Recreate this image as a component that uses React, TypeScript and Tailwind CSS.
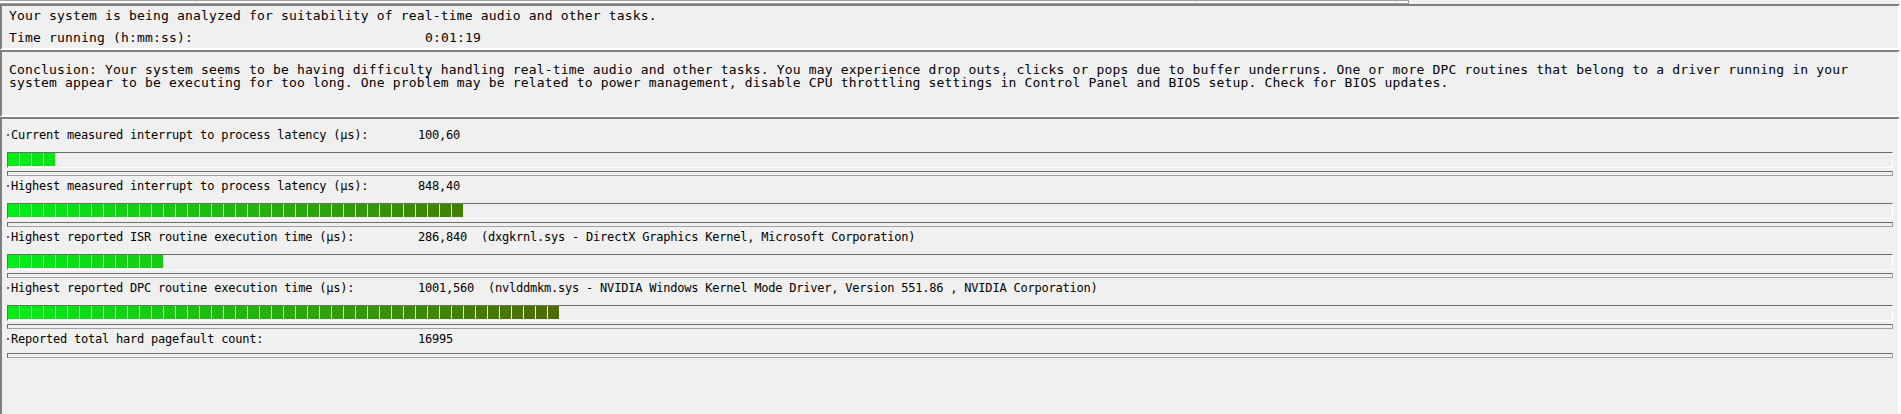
import React from "react";

type Row = { label: string; value: string; segs: number };

const ROWS: Row[] = [
  { label: "Current measured interrupt to process latency (µs):", value: "100,60", segs: 4 },
  { label: "Highest measured interrupt to process latency (µs):", value: "848,40", segs: 38 },
  {
    label: "Highest reported ISR routine execution time (µs):",
    value: "286,840  (dxgkrnl.sys - DirectX Graphics Kernel, Microsoft Corporation)",
    segs: 13,
  },
  {
    label: "Highest reported DPC routine execution time (µs):",
    value: "1001,560  (nvlddmkm.sys - NVIDIA Windows Kernel Mode Driver, Version 551.86 , NVIDIA Corporation)",
    segs: 46,
  },
];

// green -> olive, depends on block index
const segColor = (i: number) => {
  const t = i / 46;
  const r = Math.round(80 * t);
  const g = Math.round(238 - 135 * t);
  const b = Math.round(22 * (1 - t));
  return `rgb(${r},${g},${b})`;
};

const sunken = "border-2 border-t-[#7f7f7f] border-l-[#7f7f7f] border-b-white border-r-white";

const Label = ({ text, value }: { text: string; value: string }) => (
  <div className="flex h-[16px] items-center text-[12px] leading-[16px] tracking-[-0.22px] whitespace-pre">
    <span className="mr-[1px] h-[2px] w-[2px] bg-[#6a6a6a]" />
    <span className="w-[408px] pl-[1px]">{text}</span>
    <span>{value}</span>
  </div>
);

const ThinBox = () => (
  <div className="h-[5px] w-full border border-t-[#6d6d6d] border-l-[#6d6d6d] border-b-[#a0a0a0] border-r-[#a0a0a0] bg-[#f0f0f0]" />
);

const Bar = ({ segs }: { segs: number }) => (
  <div className="h-[16px] w-full border border-t-[#6d6d6d] border-l-[#6d6d6d] border-b-white border-r-white bg-[#f0f0f0]">
    <div className="flex h-[13px] gap-px">
      {Array.from({ length: segs }).map((_, i) => (
        <div key={i} className="h-full w-[11px]" style={{ backgroundColor: segColor(i) }} />
      ))}
    </div>
  </div>
);

export default function App() {
  return (
    <div className="flex h-[414px] w-[1900px] flex-col overflow-hidden bg-[#f0f0f0] font-['DejaVu_Sans_Mono',monospace] text-black">
      {/* bottom edge of the control above */}
      <div className="relative h-[4px] w-[1409px] border-t border-r border-b border-[#a0a0a0] bg-white">
        <div className="absolute top-0 left-[195px] h-full w-px bg-[#d8d8d8]" />
        <div className="absolute top-0 left-[1195px] h-full w-px bg-[#d8d8d8]" />
        <div className="absolute top-0 left-[1396px] h-full w-px bg-[#d8d8d8]" />
      </div>

      {/* status */}
      <div className={`${sunken} h-[46px] px-[7px] pt-[2px] text-[13px] leading-[16px] tracking-[0.17px] whitespace-pre`}>
        <div className="h-[16px]">Your system is being analyzed for suitability of real-time audio and other tasks.</div>
        <div className="mt-[6px] flex h-[16px]">
          <span className="w-[416px]">Time running (h:mm:ss):</span>
          <span>0:01:19</span>
        </div>
      </div>

      {/* conclusion */}
      <div className={`${sunken} h-[67px] px-[7px] pt-[11px] text-[13px] leading-[13.3px] tracking-[0.17px] whitespace-pre`}>
        <div>
          Conclusion: Your system seems to be having difficulty handling real-time audio and other tasks. You may experience drop outs, clicks or pops due to buffer underruns. One or more DPC routines that belong to a driver running in your
        </div>
        <div>
          system appear to be executing for too long. One problem may be related to power management, disable CPU throttling settings in Control Panel and BIOS setup. Check for BIOS updates.
        </div>
      </div>

      {/* measurements */}
      <div className={`${sunken} flex-1 border-b-0 pt-[8px] pr-[5px] pl-[5px]`}>
        {ROWS.map((row) => (
          <div key={row.label} className="h-[51px]">
            <Label text={row.label} value={row.value} />
            <div className="mt-[9px]">
              <Bar segs={row.segs} />
            </div>
            <div className="mt-[3px]">
              <ThinBox />
            </div>
          </div>
        ))}
        <div>
          <Label text="Reported total hard pagefault count:" value="16995" />
          <div className="mt-[6px]">
            <ThinBox />
          </div>
        </div>
      </div>
    </div>
  );
}
